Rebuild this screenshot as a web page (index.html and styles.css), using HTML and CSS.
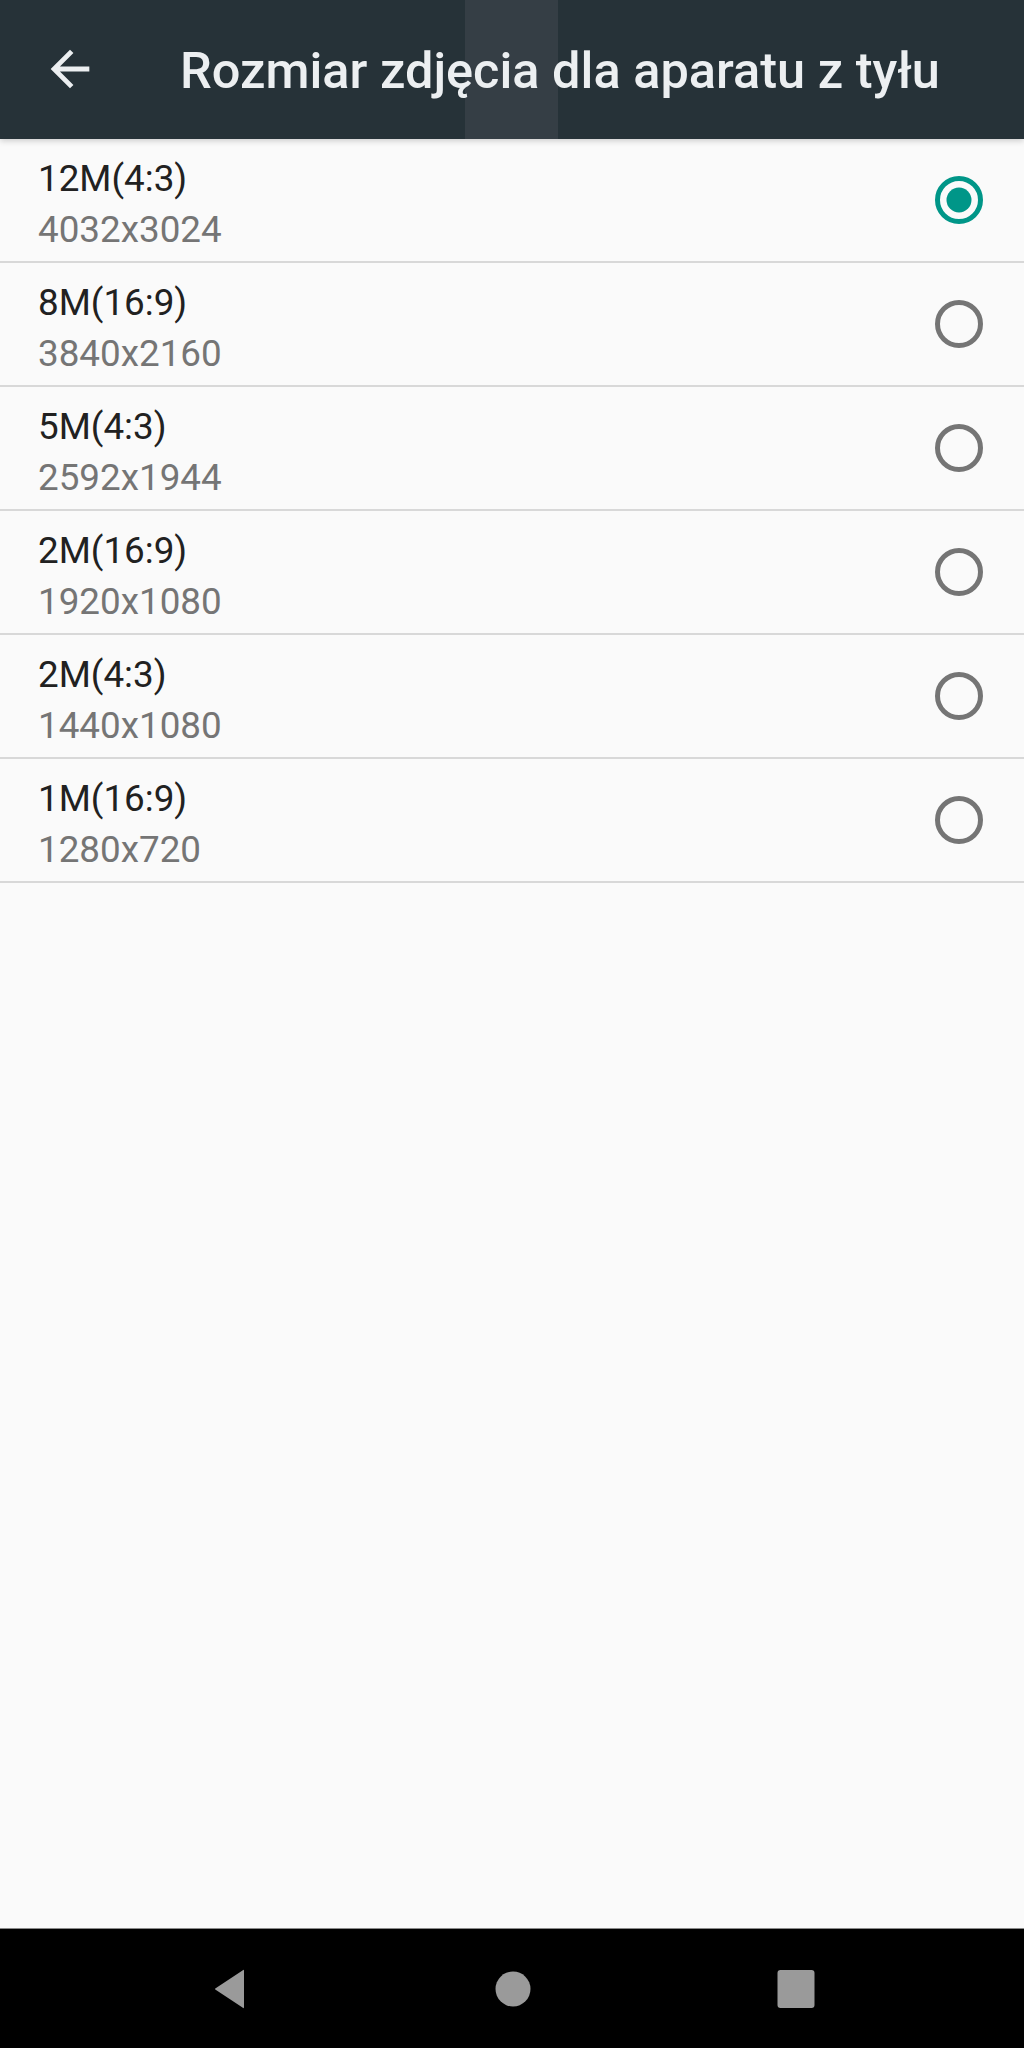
FILE: index.html
```html
<!DOCTYPE html>
<html lang="pl">
<head>
  <meta charset="UTF-8" />
  <meta name="viewport" content="width=device-width, initial-scale=1.0"/>
  <title>Rozmiar zdjęcia dla aparatu z tyłu</title>
  <link rel="stylesheet" href="styles.css">
</head>
<body>
  <div class="screen">
    <header class="toolbar">
      <div class="watermark"></div>
      <svg class="back" viewBox="0 0 24 24" width="58" height="58">
        <path d="M20 11H7.83l5.59-5.59L12 4l-8 8 8 8 1.41-1.41L7.83 13H20v-2z" fill="#eceff1"/>
      </svg>
      <h1 class="title">Rozmiar zdjęcia dla aparatu z tyłu</h1>
    </header>

    <ul class="list">
      <li class="item">
        <div class="texts">
          <div class="primary">12M(4:3)</div>
          <div class="secondary">4032x3024</div>
        </div>
        <svg class="radio" viewBox="0 0 50 50" width="50" height="50">
          <circle cx="25" cy="25" r="21.5" fill="none" stroke="#009688" stroke-width="5"/>
          <circle cx="25" cy="25" r="12.5" fill="#009688"/>
        </svg>
      </li>
      <li class="item">
        <div class="texts">
          <div class="primary">8M(16:9)</div>
          <div class="secondary">3840x2160</div>
        </div>
        <svg class="radio" viewBox="0 0 50 50" width="50" height="50">
          <circle cx="25" cy="25" r="21.5" fill="none" stroke="#757575" stroke-width="5"/>
        </svg>
      </li>
      <li class="item">
        <div class="texts">
          <div class="primary">5M(4:3)</div>
          <div class="secondary">2592x1944</div>
        </div>
        <svg class="radio" viewBox="0 0 50 50" width="50" height="50">
          <circle cx="25" cy="25" r="21.5" fill="none" stroke="#757575" stroke-width="5"/>
        </svg>
      </li>
      <li class="item">
        <div class="texts">
          <div class="primary">2M(16:9)</div>
          <div class="secondary">1920x1080</div>
        </div>
        <svg class="radio" viewBox="0 0 50 50" width="50" height="50">
          <circle cx="25" cy="25" r="21.5" fill="none" stroke="#757575" stroke-width="5"/>
        </svg>
      </li>
      <li class="item">
        <div class="texts">
          <div class="primary">2M(4:3)</div>
          <div class="secondary">1440x1080</div>
        </div>
        <svg class="radio" viewBox="0 0 50 50" width="50" height="50">
          <circle cx="25" cy="25" r="21.5" fill="none" stroke="#757575" stroke-width="5"/>
        </svg>
      </li>
      <li class="item">
        <div class="texts">
          <div class="primary">1M(16:9)</div>
          <div class="secondary">1280x720</div>
        </div>
        <svg class="radio" viewBox="0 0 50 50" width="50" height="50">
          <circle cx="25" cy="25" r="21.5" fill="none" stroke="#757575" stroke-width="5"/>
        </svg>
      </li>
    </ul>

    <div class="spacer"></div>

    <nav class="navbar">
      <svg class="nav-icon" viewBox="0 0 40 44" width="40" height="44">
        <path d="M34 4 L34 40 Q34 42 32.5 40.5 L6 23 Q4 22 6 21 L32.5 3.5 Q34 2 34 4 Z" fill="#9a9a9a"/>
      </svg>
      <svg class="nav-icon" viewBox="0 0 40 40" width="40" height="40">
        <circle cx="20" cy="20" r="17.5" fill="#9a9a9a"/>
      </svg>
      <svg class="nav-icon" viewBox="0 0 40 40" width="40" height="40">
        <rect x="1.5" y="1" width="37" height="38" rx="3" fill="#9a9a9a"/>
      </svg>
    </nav>
  </div>
</body>
</html>
```

FILE: styles.css
```css
* {
    box-sizing: border-box;
    margin: 0;
    padding: 0;
}

body {
    font-family: Roboto, 'Noto Sans', sans-serif;
    background: #fafafa;
}

.screen {
    width: 1024px;
    height: 2048px;
    display: flex;
    flex-direction: column;
    overflow: hidden;
}

.toolbar {
    position: relative;
    height: 139px;
    flex-shrink: 0;
    background: #263238;
    display: flex;
    align-items: center;
    padding-left: 41px;
    box-shadow: 0 2px 6px rgba(0,0,0,0.18);
    z-index: 2;
}

/* pasek znaku wodnego */
.watermark {
    position: absolute;
    top: 0;
    left: 465px;
    width: 93px;
    height: 139px;
    background: #353e45;
}

.back {
    position: relative;
    flex-shrink: 0;
    margin-top: -1px;
}

.title {
    position: relative;
    margin-left: 81px;
    font-size: 50.5px;
    font-weight: 500;
    color: #eceff1;
    white-space: nowrap;
    margin-top: 2px;
}

.list {
    list-style: none;
}

.item {
    height: 124px;
    border-bottom: 2px solid #d8d8d8;
    display: flex;
    align-items: center;
    justify-content: space-between;
    padding: 0 40px 0 38px;
}

.texts {
    padding: 14px 0 6px;
}

.primary {
    font-size: 36.8px;
    line-height: 51px;
    color: #212121;
}

.secondary {
    font-size: 36.8px;
    line-height: 51px;
    color: #757575;
}

.radio {
    display: block;
}

.spacer {
    flex: 1;
}

.navbar {
    height: 120px;
    flex-shrink: 0;
    background: #000;
    border-top: 1px solid #8a8a8a;
    display: flex;
    align-items: center;
    justify-content: center;
    gap: 243px;
    padding-left: 2px;
}

.nav-icon {
    display: block;
}
```
